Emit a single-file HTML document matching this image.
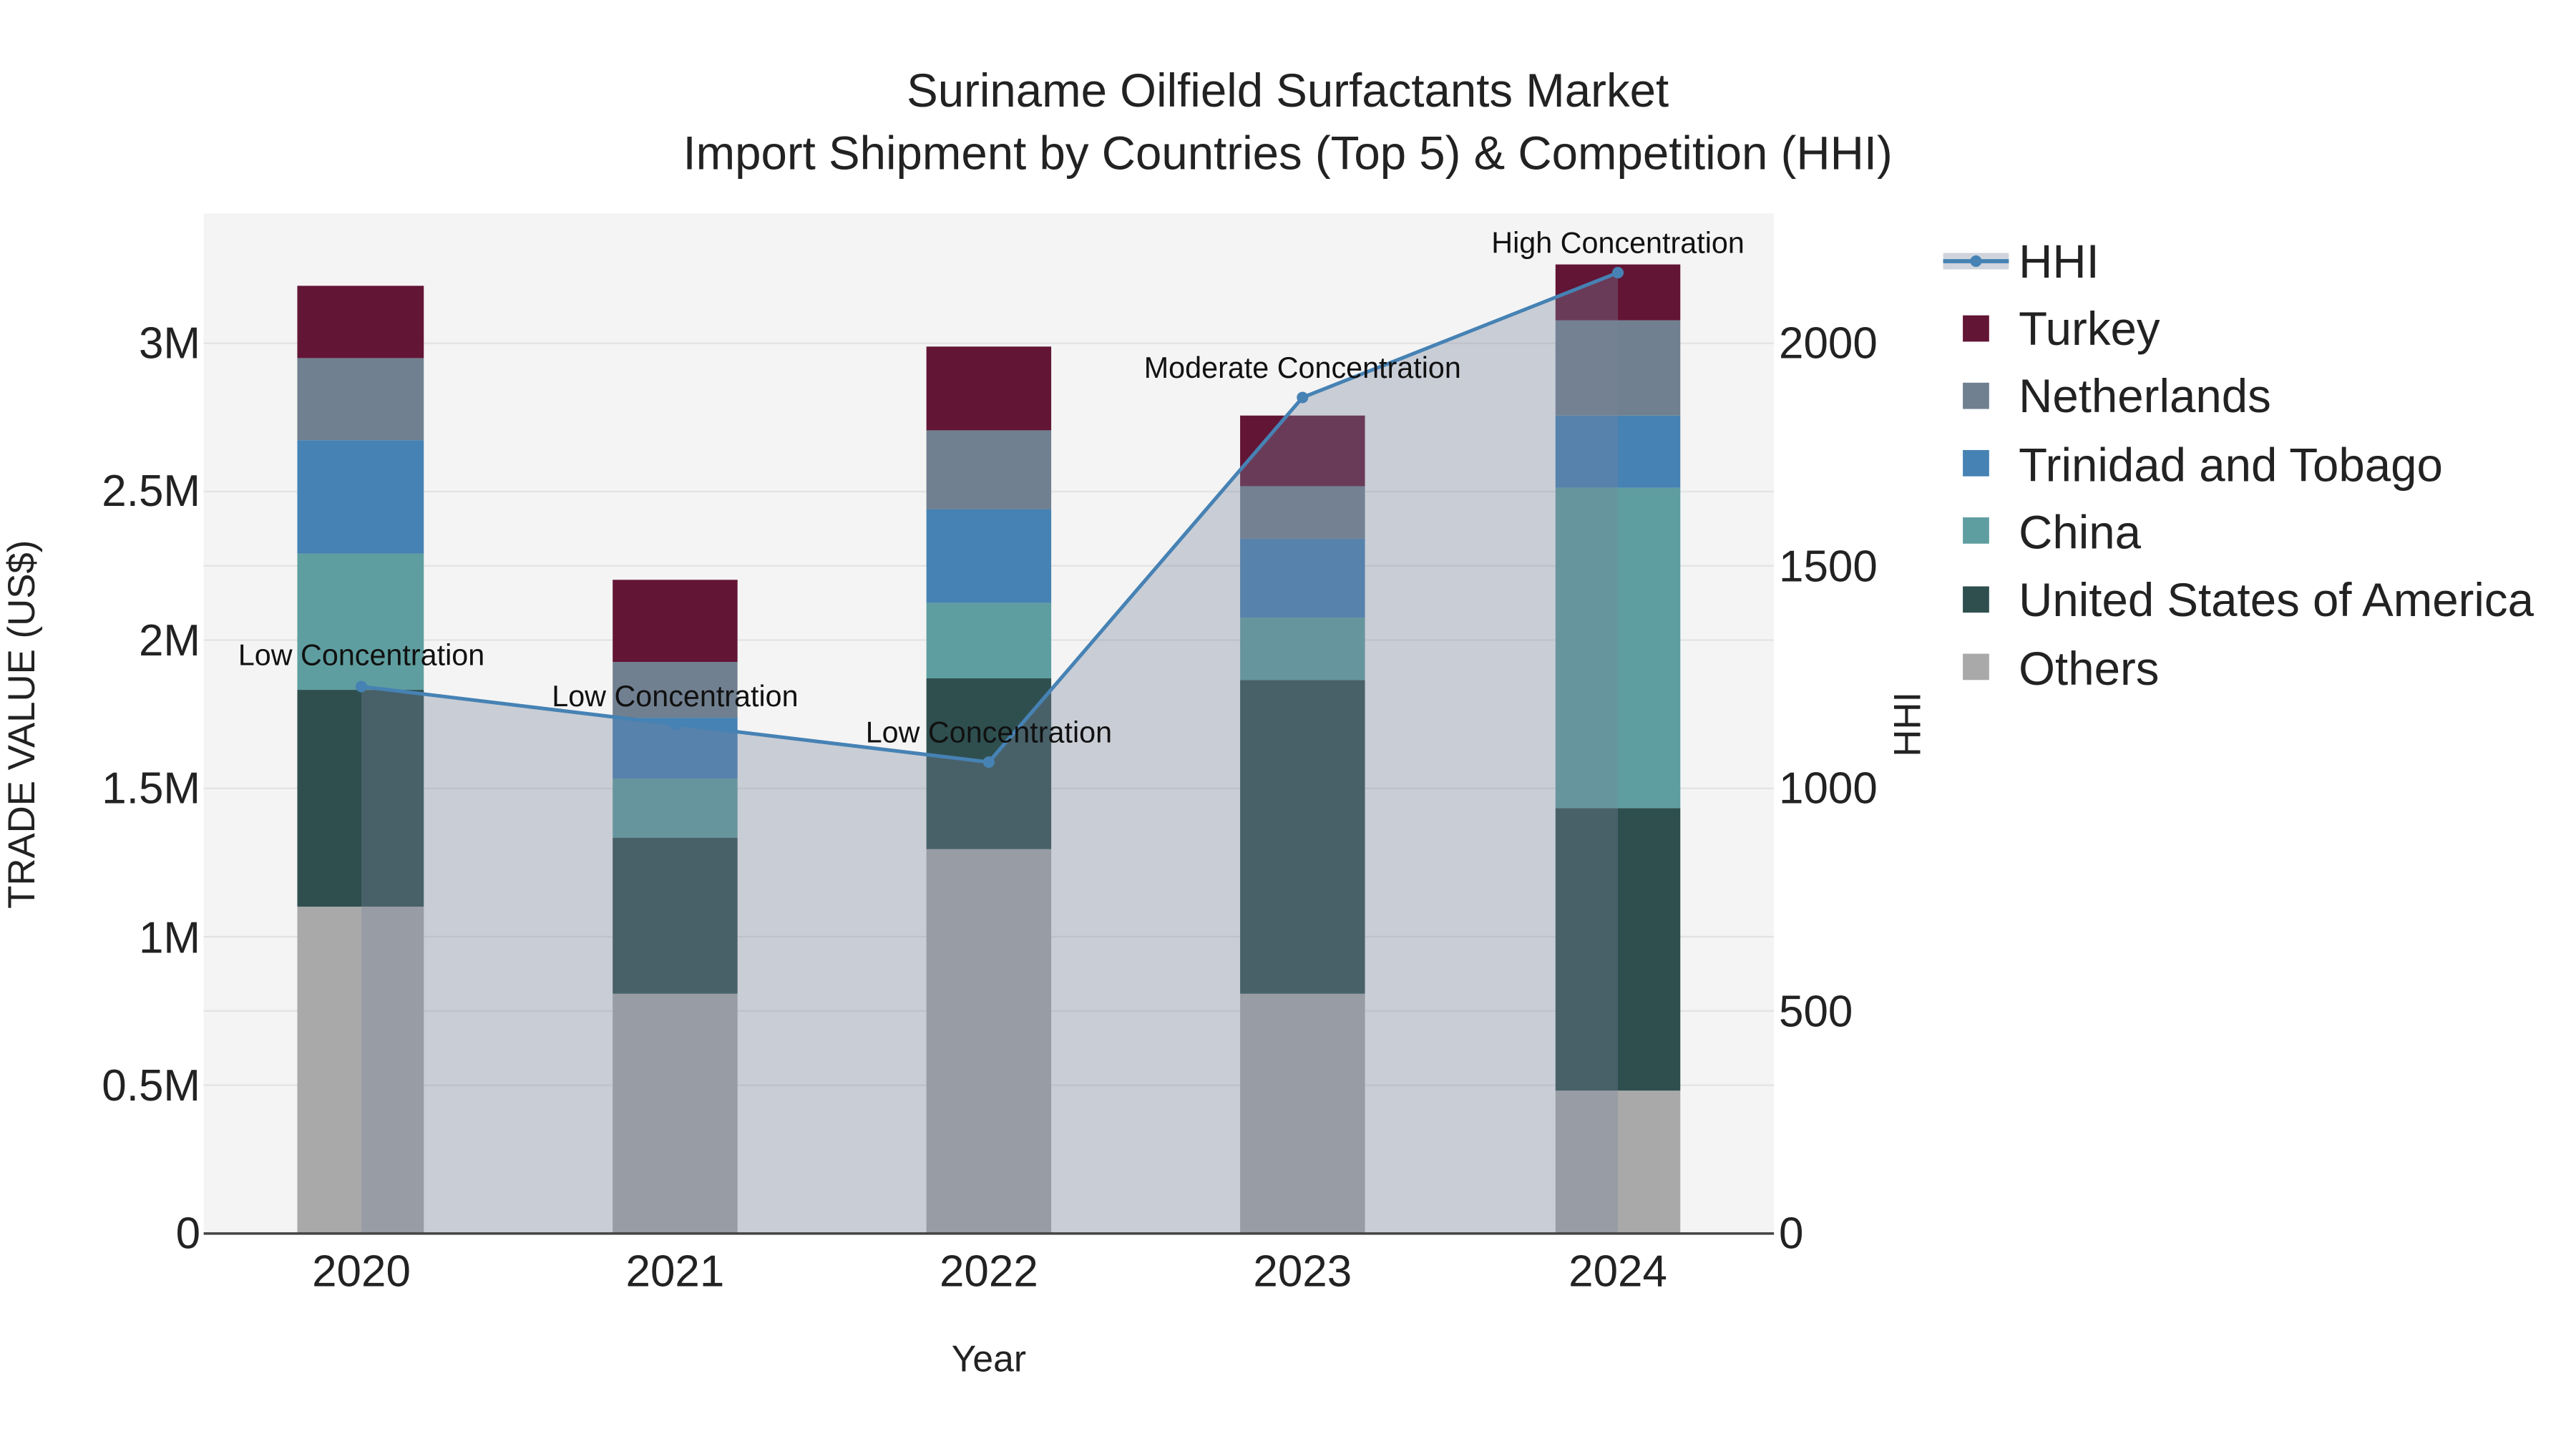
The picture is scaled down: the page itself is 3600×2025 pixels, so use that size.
<!DOCTYPE html>
<html><head><meta charset="utf-8"><style>
html,body{margin:0;padding:0;background:#fff;width:3600px;height:2025px;overflow:hidden}
svg{display:block}
text{font-family:"Liberation Sans",sans-serif}
</style></head><body>
<svg width="3600" height="2025" viewBox="0 0 1568.3 882.2" preserveAspectRatio="none" xmlns="http://www.w3.org/2000/svg">
<rect x="0" y="0" width="1570" height="885" fill="#fff"/>
<rect x="124" y="130" width="956" height="621" fill="#f4f4f4"/>
<g stroke="#e3e3e3" stroke-width="1">
<line x1="124" x2="1080" y1="660.7" y2="660.7"/><line x1="124" x2="1080" y1="570.3" y2="570.3"/>
<line x1="124" x2="1080" y1="480" y2="480"/><line x1="124" x2="1080" y1="389.7" y2="389.7"/>
<line x1="124" x2="1080" y1="299.3" y2="299.3"/><line x1="124" x2="1080" y1="209" y2="209"/>
<line x1="124" x2="1080" y1="615.5" y2="615.5"/><line x1="124" x2="1080" y1="344.5" y2="344.5"/>
</g>
<g>
<rect x="181" y="552" width="77" height="199" fill="#a9a9a9"/>
<rect x="181" y="420" width="77" height="132" fill="#2f4f4f"/>
<rect x="181" y="337" width="77" height="83" fill="#5f9ea0"/>
<rect x="181" y="268" width="77" height="69" fill="#4682b4"/>
<rect x="181" y="218" width="77" height="50" fill="#708090"/>
<rect x="181" y="174" width="77" height="44" fill="#631535"/>

<rect x="373" y="605" width="76" height="146" fill="#a9a9a9"/>
<rect x="373" y="510" width="76" height="95" fill="#2f4f4f"/>
<rect x="373" y="474" width="76" height="36" fill="#5f9ea0"/>
<rect x="373" y="437" width="76" height="37" fill="#4682b4"/>
<rect x="373" y="403" width="76" height="34" fill="#708090"/>
<rect x="373" y="353" width="76" height="50" fill="#631535"/>

<rect x="564" y="517" width="76" height="234" fill="#a9a9a9"/>
<rect x="564" y="413" width="76" height="104" fill="#2f4f4f"/>
<rect x="564" y="367" width="76" height="46" fill="#5f9ea0"/>
<rect x="564" y="310" width="76" height="57" fill="#4682b4"/>
<rect x="564" y="262" width="76" height="48" fill="#708090"/>
<rect x="564" y="211" width="76" height="51" fill="#631535"/>

<rect x="755" y="605" width="76" height="146" fill="#a9a9a9"/>
<rect x="755" y="414" width="76" height="191" fill="#2f4f4f"/>
<rect x="755" y="376" width="76" height="38" fill="#5f9ea0"/>
<rect x="755" y="328" width="76" height="48" fill="#4682b4"/>
<rect x="755" y="296" width="76" height="32" fill="#708090"/>
<rect x="755" y="253" width="76" height="43" fill="#631535"/>

<rect x="947" y="664" width="76" height="87" fill="#a9a9a9"/>
<rect x="947" y="492" width="76" height="172" fill="#2f4f4f"/>
<rect x="947" y="297" width="76" height="195" fill="#5f9ea0"/>
<rect x="947" y="253" width="76" height="44" fill="#4682b4"/>
<rect x="947" y="195" width="76" height="58" fill="#708090"/>
<rect x="947" y="161" width="76" height="34" fill="#631535"/>
</g>
<polygon points="220,751 220,418 411,441 602,464 793,242 985,166 985,751" fill="rgba(120,132,155,0.35)"/>
<line x1="124" x2="1080" y1="751" y2="751" stroke="#444" stroke-width="1.5"/>
<polyline points="220,418 411,441 602,464 793,242 985,166" fill="none" stroke="#4682b4" stroke-width="2.2"/>
<g fill="#4682b4"><circle cx="220" cy="418" r="3.5"/><circle cx="411" cy="441" r="3.5"/><circle cx="602" cy="464" r="3.5"/><circle cx="793" cy="242" r="3.5"/><circle cx="985" cy="166" r="3.5"/></g>
<g font-size="18" fill="#111" text-anchor="middle">
<text x="220" y="405">Low Concentration</text>
<text x="411" y="430">Low Concentration</text>
<text x="602" y="452">Low Concentration</text>
<text x="793" y="230">Moderate Concentration</text>
<text x="985" y="154">High Concentration</text>
</g>
<g font-size="27" fill="#222" text-anchor="end">
<text x="122" y="760">0</text><text x="122" y="670">0.5M</text><text x="122" y="580">1M</text>
<text x="122" y="489">1.5M</text><text x="122" y="399">2M</text><text x="122" y="308">2.5M</text><text x="122" y="218">3M</text>
</g>
<g font-size="27" fill="#222" text-anchor="start">
<text x="1083" y="760">0</text><text x="1083" y="625">500</text><text x="1083" y="489">1000</text>
<text x="1083" y="354">1500</text><text x="1083" y="218">2000</text>
</g>
<g font-size="27" fill="#222" text-anchor="middle">
<text x="220" y="783">2020</text><text x="411" y="783">2021</text><text x="602" y="783">2022</text><text x="793" y="783">2023</text><text x="985" y="783">2024</text>
</g>
<text x="602" y="835" font-size="22.5" fill="#222" text-anchor="middle">Year</text>
<text transform="translate(21,441) rotate(-90)" font-size="23" fill="#222" text-anchor="middle">TRADE VALUE (US$)</text>
<text transform="translate(1169,441) rotate(-90)" font-size="23" fill="#222" text-anchor="middle">HHI</text>
<g font-size="28.5" fill="#222" text-anchor="middle">
<text x="784" y="65">Suriname Oilfield Surfactants Market</text>
<text x="784" y="103">Import Shipment by Countries (Top 5) &amp; Competition (HHI)</text>
</g>
<rect x="1183" y="154" width="40" height="10" fill="rgba(120,132,155,0.35)"/>
<line x1="1183" x2="1223" y1="159" y2="159" stroke="#4682b4" stroke-width="2.5"/>
<circle cx="1203" cy="159" r="3.5" fill="#4682b4"/>
<rect x="1195" y="192" width="16" height="16" fill="#631535"/>
<rect x="1195" y="233" width="16" height="16" fill="#708090"/>
<rect x="1195" y="274" width="16" height="16" fill="#4682b4"/>
<rect x="1195" y="315" width="16" height="16" fill="#5f9ea0"/>
<rect x="1195" y="357" width="16" height="16" fill="#2f4f4f"/>
<rect x="1195" y="398" width="16" height="16" fill="#a9a9a9"/>
<g font-size="28.5" fill="#222">
<text x="1229" y="169">HHI</text><text x="1229" y="210">Turkey</text><text x="1229" y="251">Netherlands</text>
<text x="1229" y="293">Trinidad and Tobago</text><text x="1229" y="334">China</text>
<text x="1229" y="375">United States of America</text><text x="1229" y="417">Others</text>
</g>
</svg>
</body></html>
